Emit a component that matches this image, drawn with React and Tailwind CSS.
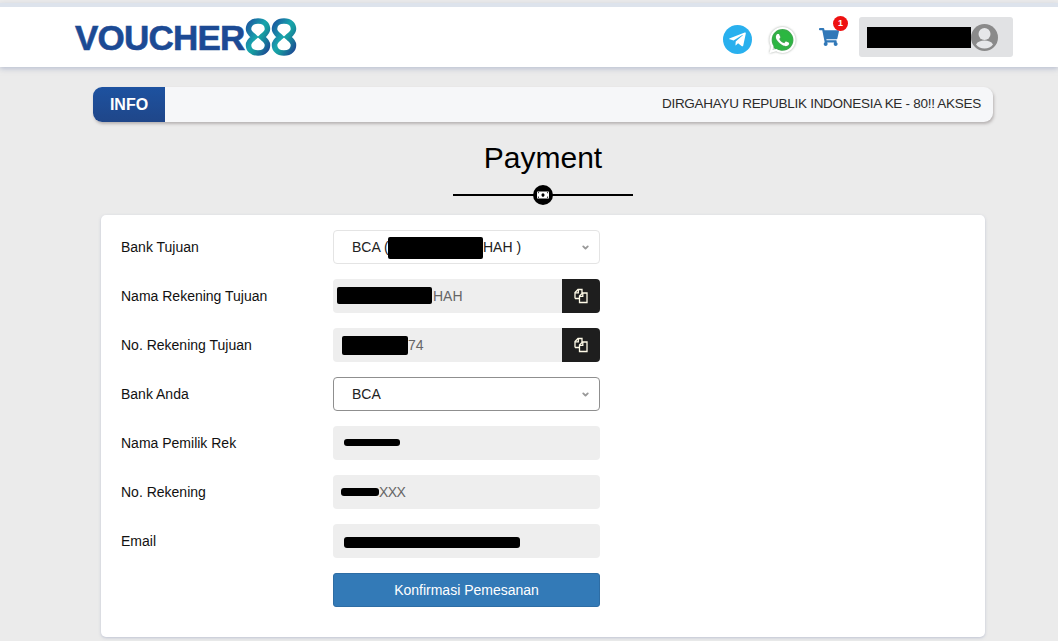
import { ChevronDown } from "lucide-react";
import { FaShoppingCart, FaTelegramPlane, FaWhatsapp, FaMoneyBill } from "react-icons/fa";

const eightPath = "M13 3C6.500 3 3.500 6.800 3.500 11c0 4 3.800 6 6 8-2.200 2-6 4-6 8 0 4.200 3 8 9.500 8s9.500-3.800 9.500-8c0-4-3.800-6-6-8 2.200-2 6-4 6-8 0-4.200-3-8-9.500-8z";

function Eight({ id }) {
  return (
    <svg width="26" height="38" viewBox="0 0 26 38" fill="none" strokeWidth="5.5">
      <defs>
        <linearGradient id={id} x1="0" y1="0" x2="1" y2="1">
          <stop offset="0" stopColor="#1b5aa0" />
          <stop offset="0.45" stopColor="#18a5ad" />
          <stop offset="0.6" stopColor="#179a9f" />
          <stop offset="1" stopColor="#1c4a94" />
        </linearGradient>
      </defs>
      <path stroke={"url(#" + id + ")"} d={eightPath} />
    </svg>
  );
}

function Logo() {
  return (
    <div className="flex items-center">
      <span className="text-[35px] leading-none font-bold tracking-[-0.8px] text-[#1c4a94] [-webkit-text-stroke:0.6px_#1c4a94]">VOUCHER</span>
      <div className="flex ml-[1px]">
        <Eight id="eightA" />
        <Eight id="eightB" />
      </div>
    </div>
  );
}

function Avatar() {
  return (
    <svg width="27" height="27" viewBox="0 0 27 27" className="shrink-0">
      <circle cx="13.500" cy="13.500" r="13.500" fill="#8a8a8a" />
      <circle cx="13.500" cy="10" r="6" fill="#e6e7e9" />
      <path d="M5 20.500c1.500-3 5-4 8.500-4s7 1 8.500 4c-2 2.500-5 4-8.500 4s-6.500-1.500-8.500-4z" fill="#e6e7e9" />
    </svg>
  );
}

function Header() {
  return (
    <div className="border-t-[4px] border-[#dde3ec] mt-[3px] bg-white h-[64px] shadow-[0_2px_5px_rgba(150,160,190,0.55)] flex items-center pl-[75px] pr-[45px]">
      <Logo />
      <div className="ml-auto flex items-center">
        <div className="w-[29px] h-[29px] rounded-full bg-[#29b0ee] flex items-center justify-center text-white text-[19px] mt-[5px]">
          <FaTelegramPlane />
        </div>
        <div className="relative ml-[16px] w-[29px] h-[29px] flex items-center justify-center mt-[5px]">
          <div className="absolute w-[24px] h-[24px] rounded-full bg-[#2bb741]"></div>
          <FaWhatsapp className="relative text-white text-[30px] drop-shadow-[0_0_1px_rgba(120,130,120,0.7)]" />
        </div>
        <div className="relative ml-[22px] mr-[20px] text-[#3178b8] text-[20px] -mt-[1px]">
          <FaShoppingCart />
          <span className="absolute -top-[11px] -right-[9px] w-[15px] h-[15px] rounded-full bg-[#ee1111] text-white text-[9px] font-bold flex items-center justify-center leading-none">1</span>
        </div>
        <div className="w-[154px] h-[40px] rounded-[3px] bg-[#e1e2e4] flex items-center pl-[8px]">
          <div className="w-[104px] h-[21px] bg-black"></div>
          <Avatar />
        </div>
      </div>
    </div>
  );
}

function InfoBar() {
  return (
    <div className="mx-[93px] w-[900px] h-[35px] mt-[20px] flex rounded-[9px] overflow-hidden bg-[#f6f7f9] shadow-[1px_2px_3px_rgba(120,110,110,0.45)]">
      <div className="w-[72px] bg-gradient-to-b from-[#1d52a0] to-[#1f4689] text-white font-bold text-[16px] flex items-center justify-center">INFO</div>
      <div className="flex-1 flex items-center justify-end pr-[12px] text-[13.5px] tracking-[-0.28px] text-[#2b2b2b] whitespace-nowrap">DIRGAHAYU REPUBLIK INDONESIA KE - 80!! AKSES</div>
    </div>
  );
}

function Title() {
  return (
    <div className="flex flex-col items-center mt-[18px] ml-[28px]">
      <h1 className="text-[30px] leading-[36px] text-black">Payment</h1>
      <div className="relative w-[180px] h-[2px] bg-black mt-[18px]">
        <div className="absolute left-[80px] -top-[9px] w-[20px] h-[20px] rounded-full bg-black flex items-center justify-center text-white text-[12px]">
          <FaMoneyBill />
        </div>
      </div>
    </div>
  );
}

function Row({ label, children }) {
  return (
    <div className="flex items-center h-[34px]">
      <div className="w-[212px] text-[14px] text-[#111]">{label}</div>
      <div className="w-[267px] h-[34px] relative">{children}</div>
    </div>
  );
}

function Blot({ className }) {
  return <div className={"absolute bg-black " + className}></div>;
}

function SelectBox({ value, dark, children }) {
  return (
    <div className={"h-full bg-white rounded-[4px] border flex items-center pl-[18px] pr-[9px] text-[14px] text-[#222] " + (dark ? "border-[#8f8f8f]" : "border-[#e4e4e4]")}>
      <span>{value}</span>
      <ChevronDown size={9} strokeWidth={5} className="ml-auto text-[#999]" />
      {children}
    </div>
  );
}

function CopyIcon() {
  return (
    <svg width="16" height="16" viewBox="0 0 16 16" fill="none" stroke="#fffbe8" strokeWidth="1.300">
      <path d="M2 10.500V4.500L5 1.500h4v3.500" />
      <path d="M2 4.800h3.300V1.500" />
      <path d="M2 10.500h4.500" />
      <path d="M6.500 14.500V8L9.500 5H14v9.500z" />
      <path d="M6.500 8.300h3.300V5" />
    </svg>
  );
}

function ReadOnly({ value, pad, copy, children }) {
  return (
    <div className="h-full flex rounded-[4px] overflow-hidden bg-[#eeeeee]">
      <div className={"flex-1 flex items-center text-[14px] text-[#666] " + pad}>{value}</div>
      {copy && (
        <div className="w-[38px] bg-[#1e1e1e] flex items-center justify-center">
          <CopyIcon />
        </div>
      )}
      {children}
    </div>
  );
}

export default function App() {
  return (
    <div className="w-[1058px] h-[641px] overflow-hidden bg-[#ebebeb] font-['Liberation_Sans',Arial,sans-serif]">
      <Header />
      <InfoBar />
      <Title />
      <div className="mx-[101px] w-[884px] h-[422px] mt-[19px] bg-white rounded-[5px] shadow-[0_1px_3px_rgba(150,160,190,0.5)] px-[20px] py-[15px] flex flex-col gap-[15px]">
        <Row label="Bank Tujuan">
          <SelectBox value="BCA (">
            <span className="absolute left-[150px] text-[14px] text-[#222]">HAH )</span>
            <Blot className="left-[55px] top-[7px] w-[95px] h-[22px] rounded-[2px]" />
          </SelectBox>
        </Row>
        <Row label="Nama Rekening Tujuan">
          <ReadOnly value="HAH" pad="pl-[100px]" copy>
            <Blot className="left-[4px] top-[8px] w-[95px] h-[17px] rounded-[2px]" />
          </ReadOnly>
        </Row>
        <Row label="No. Rekening Tujuan">
          <ReadOnly value="74" pad="pl-[75px]" copy>
            <Blot className="left-[9px] top-[8px] w-[66px] h-[19px] rounded-[2px]" />
          </ReadOnly>
        </Row>
        <Row label="Bank Anda">
          <SelectBox value="BCA" dark />
        </Row>
        <Row label="Nama Pemilik Rek">
          <ReadOnly value="">
            <Blot className="left-[11px] top-[13px] w-[56px] h-[7px] rounded-[3px]" />
          </ReadOnly>
        </Row>
        <Row label="No. Rekening">
          <ReadOnly value={<span className="tracking-[-0.6px]">XXX</span>} pad="pl-[46px]">
            <Blot className="left-[8px] top-[13px] w-[38px] h-[8px] rounded-[3px]" />
          </ReadOnly>
        </Row>
        <Row label="Email">
          <ReadOnly value="">
            <Blot className="left-[11px] top-[13px] w-[176px] h-[11px] rounded-[3px]" />
          </ReadOnly>
        </Row>
        <div className="flex h-[34px]">
          <div className="w-[212px]"></div>
          <button className="w-[267px] h-[34px] rounded-[3px] bg-[#337ab7] border border-[#2e6da4] text-white text-[14px]">Konfirmasi Pemesanan</button>
        </div>
      </div>
    </div>
  );
}
